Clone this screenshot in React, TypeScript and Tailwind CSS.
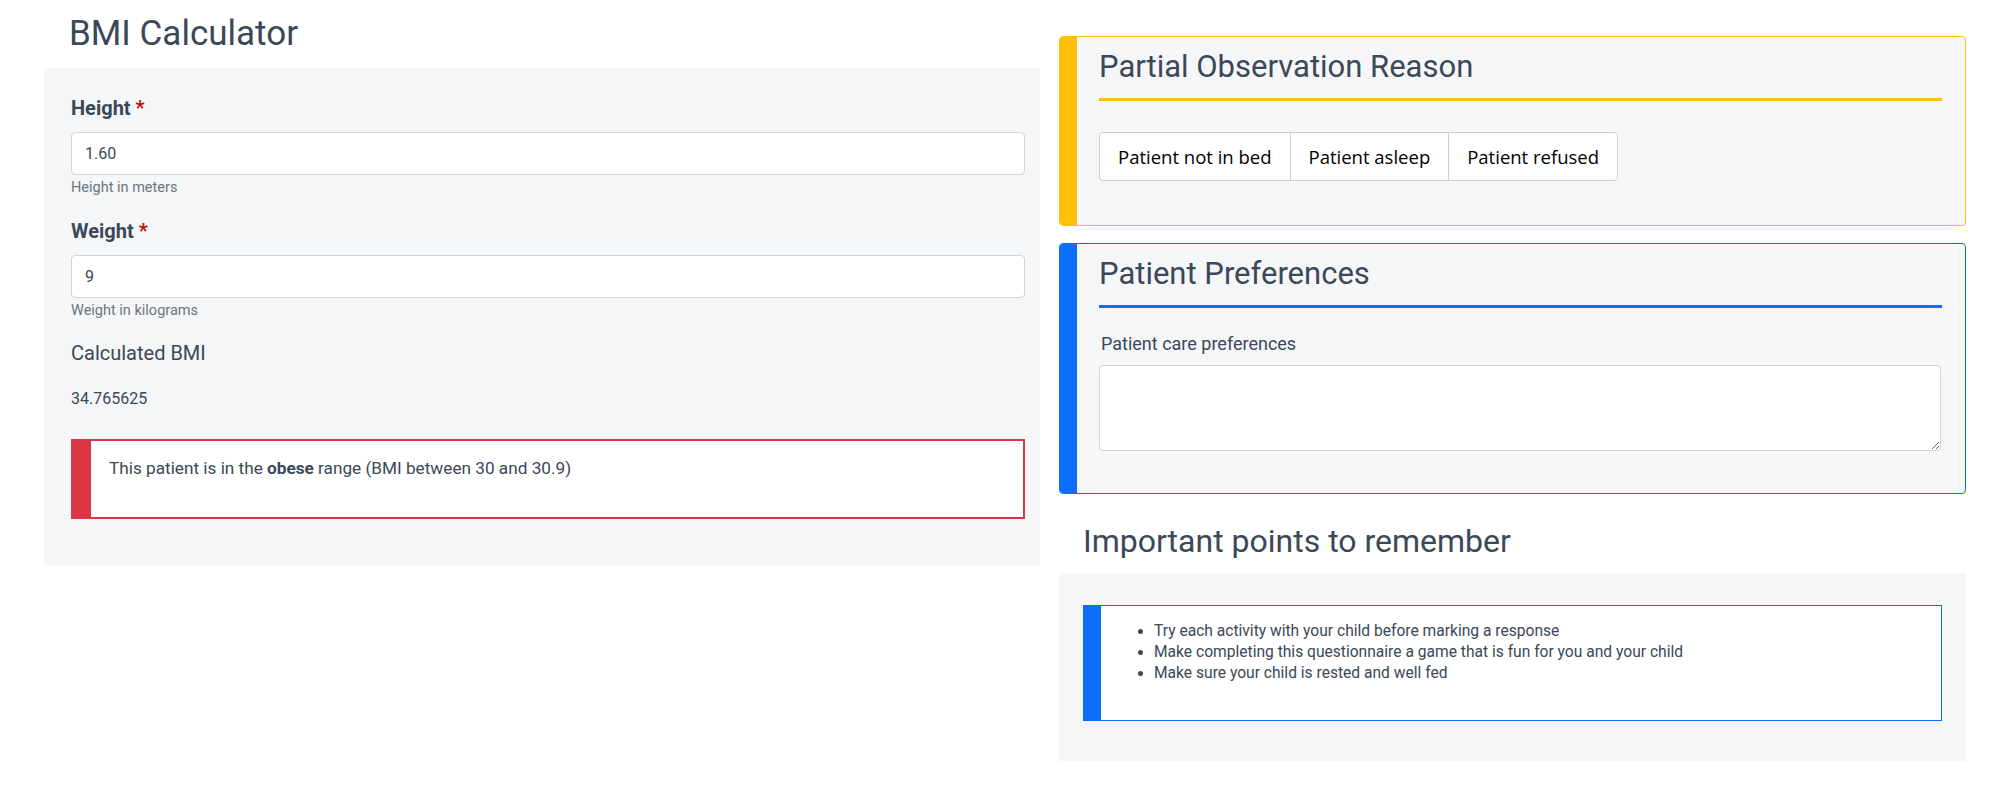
import React from "react";

const font = { fontFamily: "Roboto, 'Noto Sans', sans-serif" };

function Field({ label, value, help }: { label: string; value: string; help: string }) {
  return (
    <div>
      <label className="block text-[20px] leading-[30px] font-bold mb-[9px]">
        {label} <span className="text-[#c0100a]">*</span>
      </label>
      <input
        defaultValue={value}
        className="block w-full h-[43px] bg-white border border-[#ced4da] rounded-[4px] px-[13px] text-[16px] text-[#3a4858] outline-none"
      />
      <div className="pt-[2px] text-[14.5px] leading-[22px] text-[#6c757d]">{help}</div>
    </div>
  );
}

function Card({
  title,
  color,
  pb,
  children,
}: {
  title: string;
  color: "yellow" | "blue";
  pb: string;
  children: React.ReactNode;
}) {
  const yellow = color === "yellow";
  return (
    <div
      className={
        "flex rounded-[4px] border overflow-hidden bg-[#f5f6f8] " +
        (yellow ? "border-[#ffc107]" : "border-[#0d6efd]")
      }
    >
      <div className={"w-[17px] shrink-0 " + (yellow ? "bg-[#ffc107]" : "bg-[#0d6efd]")} />
      <div className={"flex-1 pl-[22px] pr-[23px] pt-[8px] " + pb}>
        <h2
          className={
            "text-[31px] leading-[44px] pb-[9px] border-b-[3px] " +
            (yellow ? "border-[#ffc107]" : "border-[#0d6efd]")
          }
        >
          {title}
        </h2>
        {children}
      </div>
    </div>
  );
}

export default function App() {
  return (
    <div className="min-h-screen bg-white text-[#3a4858] pl-[44px] pr-[46px] flex gap-[19px] items-start" style={font}>
      {/* left column */}
      <div className="w-[996px] shrink-0">
        <h1 className="pl-[25px] pt-[13px] text-[35px] leading-[42px] mb-[13px]">BMI Calculator</h1>
        <div className="bg-[#f5f6f8] pl-[27px] pr-[15px] pt-[25px] pb-[46px]">
          <Field label="Height" value="1.60" help="Height in meters" />
          <div className="mt-[17px]">
            <Field label="Weight" value="9" help="Weight in kilograms" />
          </div>
          <div className="mt-[15px] text-[20px] leading-[33px]">Calculated BMI</div>
          <div className="mt-[16px] text-[16px] leading-[25px]">34.765625</div>
          <div className="mt-[28px] flex h-[80px] border-2 border-[#dc3545] bg-white">
            <div className="w-[18px] bg-[#dc3545]" />
            <div className="pl-[18px] pt-[15px] text-[17.2px] leading-[25px]">
              This patient is in the <b>obese</b> range (BMI between 30 and 30.9)
            </div>
          </div>
        </div>
      </div>

      {/* right column */}
      <div className="flex-1 pt-[36px]">
        <Card title="Partial Observation Reason" color="yellow" pb="pb-[44px]">
          <div
            className="mt-[31px] inline-flex border border-[#ccc] rounded-[4px] bg-white text-[18.5px] text-black"
            style={{ fontFamily: "'Open Sans', 'Noto Sans', sans-serif" }}
          >
            {["Patient not in bed", "Patient asleep", "Patient refused"].map((b, i) => (
              <button
                key={b}
                className={"h-[47px] px-[18px] " + (i > 0 ? "border-l border-[#ccc]" : "")}
              >
                {b}
              </button>
            ))}
          </div>
        </Card>

        <div className="mt-[17px]">
          <Card title="Patient Preferences" color="blue" pb="pb-[42px]">
            <div className="mt-[22px] text-[18px] leading-[27px] pl-[2px]">Patient care preferences</div>
            <textarea className="mt-[8px] block w-[calc(100%-1px)] h-[86px] bg-white border border-[#ced4da] rounded-[4px] outline-none" />
          </Card>
        </div>

        <h2 className="mt-[25px] pl-[24px] text-[32px] leading-[44px]">Important points to remember</h2>
        <div className="mt-[10px] bg-[#f5f6f8] px-[24px] pt-[32px] pb-[40px]">
          <div className="flex border border-[#0d6efd] bg-white h-[116px]">
            <div className="w-[17px] bg-[#0d6efd]" />
            <ul className="list-disc pl-[53px] pt-[15px] text-[15.6px] leading-[21px]">
              <li>Try each activity with your child before marking a response</li>
              <li>Make completing this questionnaire a game that is fun for you and your child</li>
              <li>Make sure your child is rested and well fed</li>
            </ul>
          </div>
        </div>
      </div>
    </div>
  );
}
